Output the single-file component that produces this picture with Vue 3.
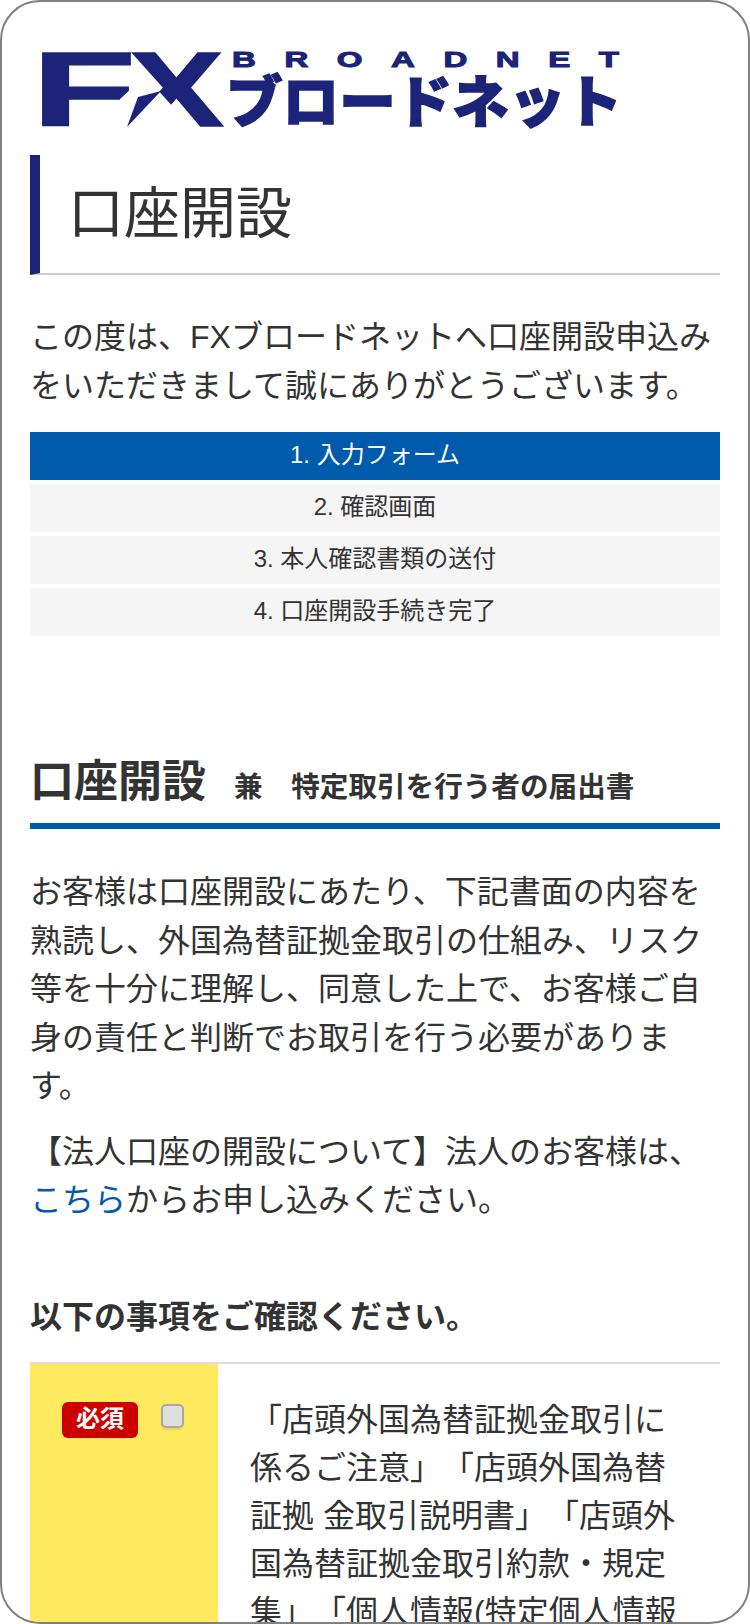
<template>
  <div class="page">
    <div class="logo">
      <svg class="logo-svg" viewBox="0 0 580 80" width="580" height="80" aria-label="FXブロードネット">
        <!-- FX mark, real text stretched out to the logo's wide shape -->
        <text class="logo-fx" transform="translate(-10 77) scale(1.7 1.05)">F</text>
        <text class="logo-fx" transform="translate(87 77) scale(1.42 1.05)">X</text>
        <!-- white cut takes the lower left leg off the X, the shard replaces it -->
        <polygon points="103,27 152,81 78,81 78,50" fill="#fff" />
        <polygon points="85,78 96,48 119,42" fill="#1b2478" />
        <text class="logo-en" transform="translate(190 18) scale(1.5 1)" textLength="258">BROADNET</text>
        <text class="logo-ja" x="184" y="73" textLength="396" lengthAdjust="spacingAndGlyphs">ブロードネット</text>
      </svg>
    </div>

    <h1 class="page-title">口座開設</h1>

    <p class="lead">この度は、FXブロードネットへ口座開設申込みをいただきまして誠にありがとうございます。</p>

    <ul class="steps">
      <li v-for="(step, i) in steps" :key="step" class="step" :class="{ active: i === 0 }">
        {{ i + 1 }}. {{ step }}
      </li>
    </ul>

    <h2 class="section-title">口座開設<small>兼　特定取引を行う者の届出書</small></h2>

    <p class="body-text first">お客様は口座開設にあたり、下記書面の内容を熟読し、外国為替証拠金取引の仕組み、リスク等を十分に理解し、同意した上で、お客様ご自身の責任と判断でお取引を行う必要があります。</p>
    <p class="body-text">【法人口座の開設について】法人のお客様は、<a href="#">こちら</a>からお申し込みください。</p>

    <h3 class="confirm-title">以下の事項をご確認ください。</h3>

    <div class="confirm-row">
      <div class="confirm-check">
        <span class="badge">必須</span>
        <span class="checkbox"></span>
      </div>
      <div class="confirm-text">「店頭外国為替証拠金取引に係るご注意」「店頭外国為替証拠 金取引説明書」「店頭外国為替証拠金取引約款・規定集」「個人情報(特定個人情報等を含む)の取扱いについて」</div>
    </div>
  </div>
</template>

<script setup>
const steps = ['入力フォーム', '確認画面', '本人確認書類の送付', '口座開設手続き完了']
</script>

<style>
html, body {
  margin: 0;
  background: #fff;
}
</style>

<style scoped>
.page {
  box-sizing: border-box;
  width: 750px;
  height: 1624px;
  overflow: hidden;
  background: #fff;
  border: 2px solid #808080;
  border-radius: 40px;
  padding: 0 28px;
  font-family: "Liberation Sans", "Noto Sans CJK JP", sans-serif;
  color: #333;
  text-spacing-trim: space-all;
}

.logo {
  padding: 47px 0 0 12px;
  height: 106px;
  box-sizing: border-box;
}

.logo-svg {
  display: block;
  overflow: visible;
}

.logo-fx {
  font-family: "Liberation Sans", sans-serif;
  font-weight: 700;
  font-size: 100px;
  fill: #1b2478;
  stroke: #1b2478;
  stroke-width: 1.5px;
}

.logo-en {
  font-family: "Liberation Sans", sans-serif;
  font-weight: 700;
  font-size: 22px;
  fill: #1b2478;
  stroke: #1b2478;
  stroke-width: 1px;
}

.logo-ja {
  font-family: "Noto Sans CJK JP", sans-serif;
  font-weight: 900;
  font-size: 56px;
  fill: #1b2478;
  stroke: #1b2478;
  stroke-width: 1.5px;
}

.page-title {
  margin: 47px 0 0;
  height: 120px;
  box-sizing: border-box;
  border-left: 10px solid #1b2478;
  border-bottom: 2px solid #ccc;
  padding-left: 28px;
  font-size: 56px;
  font-weight: 400;
  line-height: 118px;
}

.lead {
  margin: 0;
  padding-top: 38px;
  font-size: 32px;
  line-height: 49px;
}

.steps {
  list-style: none;
  margin: 21px 0 0;
  padding: 0;
  display: flex;
  flex-direction: column;
  gap: 4px;
}

.step {
  height: 48px;
  line-height: 45px;
  text-align: center;
  font-size: 24px;
  background: #f5f5f5;
}

.step.active {
  background: #005bac;
  color: #fff;
}

.section-title {
  margin: 116px 0 0;
  padding: 0 0 6px;
  border-bottom: 6px solid #005bac;
  font-size: 44px;
  line-height: 60px;
  font-weight: 700;
}

.section-title small {
  margin-left: 28px;
  font-size: 28.6px;
}

.body-text {
  margin: 17px 0 0;
  font-size: 32px;
  line-height: 48.5px;
}

.body-text.first {
  margin-top: 39px;
}

.body-text a {
  color: #005bac;
  text-decoration: none;
}

.confirm-title {
  margin: 70px 0 0;
  font-size: 32px;
  line-height: 44px;
  font-weight: 700;
}

.confirm-row {
  display: flex;
  margin-top: 23px;
  border-top: 2px solid #ddd;
}

.confirm-check {
  width: 188px;
  flex: none;
  box-sizing: border-box;
  padding: 38px 0 0 32px;
  background: #ffe95f;
  display: flex;
  align-items: flex-start;
  gap: 23px;
}

.badge {
  width: 76px;
  height: 36px;
  line-height: 34px;
  border-radius: 6px;
  background: #cc0000;
  color: #fff;
  text-align: center;
  font-size: 24px;
  font-weight: 700;
}

.checkbox {
  width: 23px;
  height: 24px;
  margin-top: 2px;
  box-sizing: border-box;
  border: 2px solid #a8a8a8;
  border-radius: 5px;
  background: #dedede;
  box-shadow: 0 2px 1px rgba(0, 0, 0, 0.08);
}

.confirm-text {
  padding: 32px 30px 0 32px;
  font-size: 32px;
  line-height: 48px;
}
</style>
